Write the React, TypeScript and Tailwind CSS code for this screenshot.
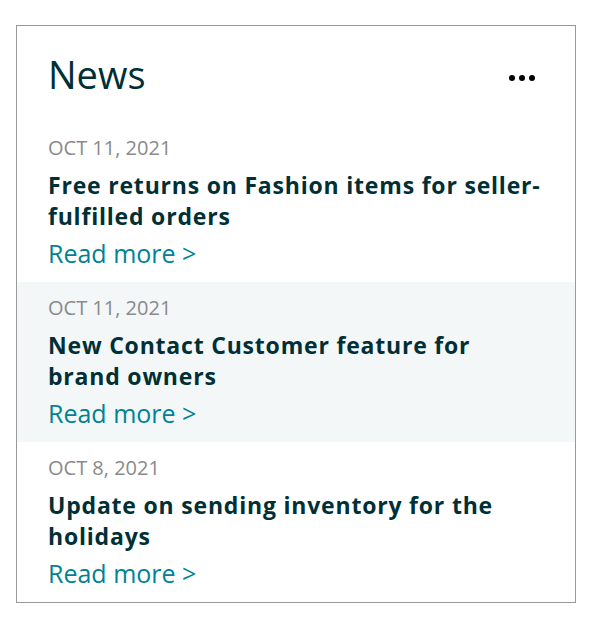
import React from "react";

const items = [
  { date: "OCT 11, 2021", title: "Free returns on Fashion items for seller-fulfilled orders", shade: false },
  { date: "OCT 11, 2021", title: "New Contact Customer feature for brand owners", shade: true },
  { date: "OCT 8, 2021", title: "Update on sending inventory for the holidays", shade: false },
];

export default function App() {
  return (
    <div className="w-[610px] h-[634px] bg-white pt-[25px] pl-[16px]" style={{ fontFamily: '"Open Sans", "Noto Sans", sans-serif' }}>
      <div className="w-[560px] h-[578px] border border-[#999999] bg-white">
        <div className="h-[96px] pl-[31px] pr-[40px] pt-[26px] flex items-start justify-between">
          <h1 className="text-[38px] leading-[44px] text-[#002f36] font-normal">News</h1>
          <div className="flex items-center gap-[4px] mt-[23px]">
            <span className="w-[6px] h-[6px] rounded-full bg-black" />
            <span className="w-[6px] h-[6px] rounded-full bg-black" />
            <span className="w-[6px] h-[6px] rounded-full bg-black" />
          </div>
        </div>
        {items.map((it, i) => (
          <div key={i} className={`h-[160px] pl-[31px] pr-[28px] pt-[14px] ${it.shade ? "bg-[#f3f7f7]" : "bg-white"}`}>
            <div className="text-[20px] leading-[24px] text-[#8a8a8a]">{it.date}</div>
            <div className="mt-[10px] text-[23px] leading-[31px] tracking-[0.8px] font-bold text-[#002f36]">{it.title}</div>
            <div className="mt-[5px] text-[25px] leading-[32px] text-[#008296]">Read more &gt;</div>
          </div>
        ))}
      </div>
    </div>
  );
}
